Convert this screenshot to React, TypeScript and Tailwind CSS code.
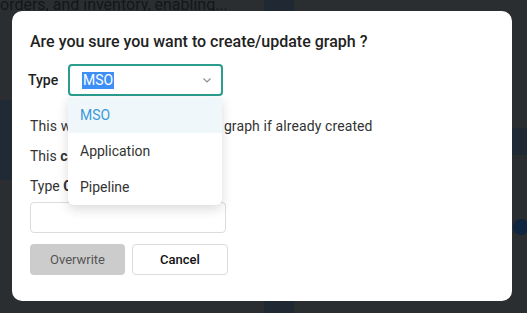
import React from "react"

const font = { fontFamily: "Roboto, 'Noto Sans', sans-serif" }

const options = ["MSO", "Application", "Pipeline"]

export default function App() {
  return (
    <div className="relative w-[527px] h-[313px] overflow-hidden bg-[#2b2e31]" style={font}>
      {/* page behind the overlay */}
      <div className="absolute left-0 top-[-5px] text-[16px] leading-[20px] text-[#141618] whitespace-nowrap">
        orders, and inventory, enabling...
      </div>
      <div className="absolute left-0 top-[100px] w-[12px] h-[80px] bg-[#1f2a35]" />
      <div className="absolute left-[264px] top-0 w-[30px] h-[11px] bg-[#1f2833]" />
      <div className="absolute left-[264px] top-[301px] w-[30px] h-[12px] bg-[#1f2833]" />
      <div className="absolute left-[512px] top-[128px] w-[15px] h-[27px] bg-[#1f2a35]" />
      <div className="absolute left-[513px] top-[219px] w-[16px] h-[16px] rounded-full bg-[#0f2540]" />

      <div className="pl-[12px] pt-[11px]">
        <div className="relative w-[500px] h-[290px] rounded-[10px] bg-white pl-[18px] pt-[19px]">
          <h2 className="text-[16px] leading-[24px] font-medium text-[#222]">
            Are you sure you want to create/update graph ?
          </h2>

          <div className="mt-[10px] flex items-center">
            <span className="ml-[-2px] w-[40px] text-[14px] font-medium text-[#222]">Type</span>
            <div className="relative">
              <div className="flex h-[32px] w-[155px] items-center justify-between rounded-[4px] border-2 border-[#2a9d8f] pl-[12px] pr-[8px]">
                <span className="bg-[#3d8ef5] px-[1px] text-[14px] leading-[17px] text-white">MSO</span>
                <svg width="12" height="12" viewBox="0 0 12 12" fill="none">
                  <path d="M2.5 4.5 L6 8 L9.5 4.5" stroke="#8a8f96" strokeWidth="1.2" />
                </svg>
              </div>
              <ul className="absolute left-0 top-[33px] z-10 w-[154px] overflow-hidden rounded-b-[6px] bg-white shadow-[0_4px_12px_rgba(0,0,0,0.15)]">
                {options.map((o, i) => (
                  <li
                    key={o}
                    className={
                      i === 0
                        ? "flex h-[36px] items-center bg-[#eff7fb] pl-[12px] text-[14px] text-[#3a9ad9]"
                        : "flex h-[36px] items-center pl-[12px] text-[14px] text-[#333]"
                    }
                  >
                    {o}
                  </li>
                ))}
              </ul>
            </div>
          </div>

          <p className="mt-[20px] text-[14px] leading-[20px] text-[#333] tracking-[0.1px]">
            This will overwrite the existing graph if already created
          </p>
          <p className="mt-[10px] text-[14px] leading-[20px] text-[#333]">
            This <b>cannot</b> be undone.
          </p>
          <p className="mt-[10px] text-[14px] leading-[20px] text-[#333]">
            Type <b>CONFIRM</b> to continue
          </p>
          <input className="mt-[6px] block h-[31px] w-[196px] rounded-[4px] border border-[#dcdcdc] outline-none" />

          <div className="mt-[11px] flex gap-[7px]">
            <button className="h-[31px] w-[95px] rounded-[4px] bg-[#cccccc] text-[13px] text-[#555]">
              Overwrite
            </button>
            <button className="h-[31px] w-[96px] rounded-[4px] border border-[#dcdcdc] bg-white text-[13px] font-medium text-[#111]">
              Cancel
            </button>
          </div>
        </div>
      </div>
    </div>
  )
}
